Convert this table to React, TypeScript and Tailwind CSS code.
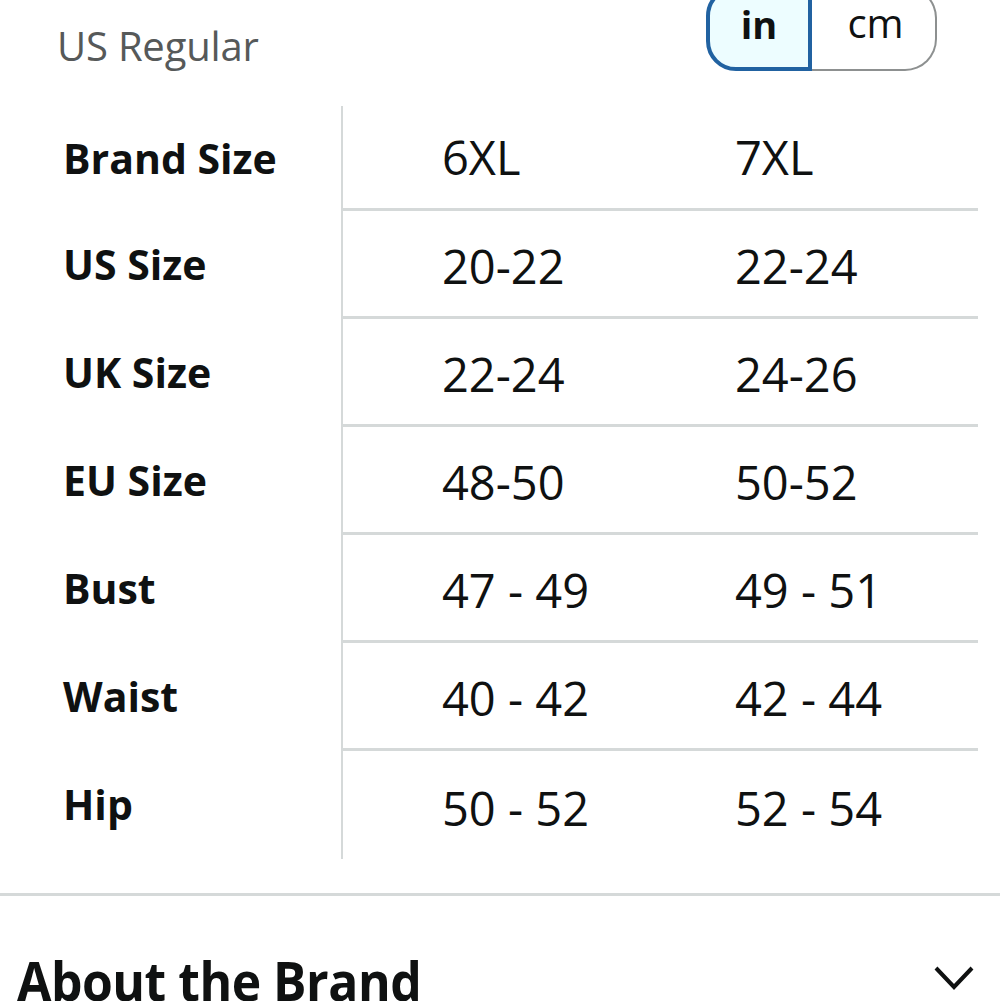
import React from "react";

const ROWS = [
  { label: "Brand Size", a: "6XL", b: "7XL" },
  { label: "US Size", a: "20-22", b: "22-24" },
  { label: "UK Size", a: "22-24", b: "24-26" },
  { label: "EU Size", a: "48-50", b: "50-52" },
  { label: "Bust", a: "47 - 49", b: "49 - 51" },
  { label: "Waist", a: "40 - 42", b: "42 - 44" },
  { label: "Hip", a: "50 - 52", b: "52 - 54" },
];

const FONT = { fontFamily: '"Open Sans", "Noto Sans", Arial, sans-serif' };

export default function App() {
  return (
    <div className="h-[1001px] w-[1000px] overflow-hidden bg-white text-[#0f1111]" style={FONT}>
      {/* header: fit type + unit toggle */}
      <div className="flex items-start justify-between pr-[63px]">
        <div className="pl-[57px] pt-[21px] text-[40px] leading-[50px] tracking-[-0.2px] text-[#565959]">
          US Regular
        </div>
        <div className="-mt-[14px] flex h-[85px]">
          <button className="flex w-[106px] items-end justify-center rounded-bl-[30px] rounded-tl-[30px] border-[4px] border-[#2162a1] bg-[#edfdff] pb-[24px] text-[38px] font-bold leading-none">
            in
          </button>
          <button className="flex w-[125px] items-end justify-center rounded-br-[32px] rounded-tr-[32px] border-y-2 border-r-2 border-[#8d9090] pb-[26px] pl-[4px] text-[40px] leading-none">
            cm
          </button>
        </div>
      </div>

      {/* size table */}
      <div className="mt-[35px] pr-[22px]">
        {ROWS.map((r, i) => (
          <div key={r.label} className="flex">
            <div
              className={`flex w-[341px] shrink-0 items-center pl-[63px] text-[41px] font-bold ${
                i === 0 ? "h-[105px]" : "h-[108px]"
              }`}
            >
              {r.label}
            </div>
            <div
              className={`flex flex-1 items-center border-l-2 border-[#d5d9d9] text-[47px] ${
                i < ROWS.length - 1 ? "border-b-[3px]" : ""
              } ${i === 0 ? "h-[105px]" : "h-[108px]"} ${i === 0 ? "pt-0" : "pt-[6px]"}`}
            >
              <div className="w-[292px] pl-[99px]">{r.a}</div>
              <div className="pl-[100px]">{r.b}</div>
            </div>
          </div>
        ))}
      </div>

      {/* divider */}
      <div className="mt-[34px] h-[3px] w-full bg-[#d5d9d9]" />

      {/* about the brand */}
      <div className="flex items-center justify-between pl-[17px] pr-[25px] pt-[58px]">
        <h2 className="origin-left scale-x-[0.94] text-[53px] font-bold leading-none tracking-[-0.5px]">
          About the Brand
        </h2>
        <svg width="42" height="26" viewBox="0 0 42 26" className="mt-[-6px]">
          <path d="M3 3 L21 22 L39 3" fill="none" stroke="#0f1111" strokeWidth="4" />
        </svg>
      </div>
    </div>
  );
}
